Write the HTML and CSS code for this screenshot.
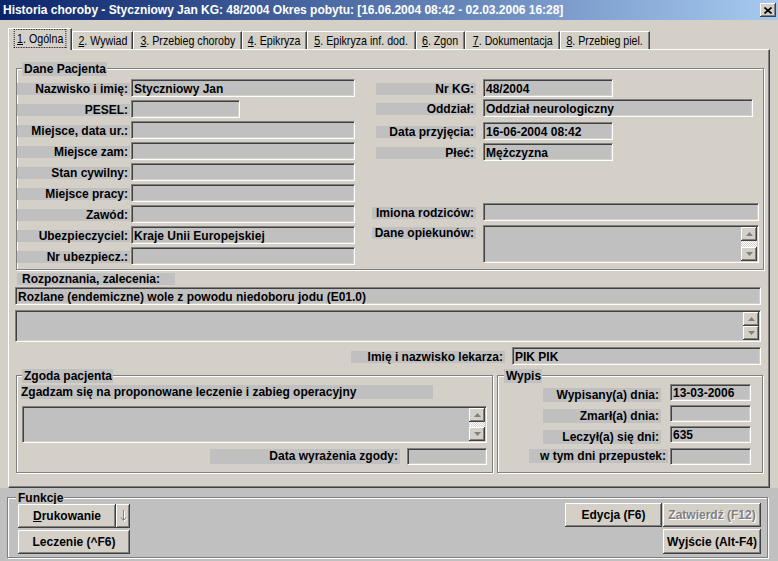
FILE: index.html
```html
<!DOCTYPE html>
<html>
<head>
<meta charset="utf-8">
<link rel="stylesheet" href="styles.css">
</head>
<body>
<div class="window">
  <div class="titlebar">
    <div class="title">Historia choroby - Styczniowy Jan KG: 48/2004 Okres pobytu: [16.06.2004 08:42 - 02.03.2006 16:28]</div>
    <div class="close"><svg width="8" height="7" viewBox="0 0 8 7"><path d="M0.5 0.5L7.5 6.5M7.5 0.5L0.5 6.5" stroke="#000" stroke-width="1.7"/></svg></div>
  </div>

  <div class="tabs">
    <div class="tab active t1"><span class="tt focus"><u>1</u>. Ogólna</span></div>
    <div class="tab t2"><span class="tt"><u>2</u>. Wywiad</span></div>
    <div class="tab t3"><span class="tt"><u>3</u>. Przebieg choroby</span></div>
    <div class="tab t4"><span class="tt"><u>4</u>. Epikryza</span></div>
    <div class="tab t5"><span class="tt"><u>5</u>. Epikryza inf. dod.</span></div>
    <div class="tab t6"><span class="tt"><u>6</u>. Zgon</span></div>
    <div class="tab t7"><span class="tt"><u>7</u>. Dokumentacja</span></div>
    <div class="tab t8"><span class="tt"><u>8</u>. Przebieg piel.</span></div>
  </div>

  <div class="panel">
    <div class="group dane">
      <div class="legend">Dane Pacjenta</div>
      <div class="cols">
        <div class="col-left">
          <div class="row"><div class="lbl">Nazwisko i imię:</div><div class="fld w224">Styczniowy Jan</div></div>
          <div class="row"><div class="lbl">PESEL:</div><div class="fld w109"></div></div>
          <div class="row"><div class="lbl">Miejsce, data ur.:</div><div class="fld w224"></div></div>
          <div class="row"><div class="lbl">Miejsce zam:</div><div class="fld w224"></div></div>
          <div class="row"><div class="lbl">Stan cywilny:</div><div class="fld w224"></div></div>
          <div class="row"><div class="lbl">Miejsce pracy:</div><div class="fld w224"></div></div>
          <div class="row"><div class="lbl">Zawód:</div><div class="fld w224"></div></div>
          <div class="row"><div class="lbl">Ubezpieczyciel:</div><div class="fld w224">Kraje Unii Europejskiej</div></div>
          <div class="row"><div class="lbl">Nr ubezpiecz.:</div><div class="fld w224"></div></div>
        </div>
        <div class="col-right">
          <div class="row r1"><div class="lbl rl">Nr KG:</div><div class="fld w130">48/2004</div></div>
          <div class="row r2"><div class="lbl rl">Oddział:</div><div class="fld w270">Oddział neurologiczny</div></div>
          <div class="row r3"><div class="lbl rl">Data przyjęcia:</div><div class="fld w130">16-06-2004 08:42</div></div>
          <div class="row r4"><div class="lbl rl">Płeć:</div><div class="fld w130">Mężczyzna</div></div>
          <div class="row r5"><div class="lbl rl wide">Imiona rodziców:</div><div class="fld w276"></div></div>
          <div class="row r6"><div class="lbl rl wide top">Dane opiekunów:</div>
            <div class="fld memo w276 h38"><div class="memo-body"></div><div class="sbar"><div class="sbtn"><svg width="7" height="4" viewBox="0 0 7 4"><path d="M3.5 0L7 4H0z" fill="#808080"/></svg></div><div class="strack"></div><div class="sbtn"><svg width="7" height="4" viewBox="0 0 7 4"><path d="M0 0H7L3.5 4z" fill="#808080"/></svg></div></div></div>
          </div>
        </div>
      </div>
    </div>

    <div class="lbl rozp">Rozpoznania, zalecenia:</div>
    <div class="fld diag">Rozlane (endemiczne) wole z powodu niedoboru jodu (E01.0)</div>
    <div class="fld memo diag-memo"><div class="memo-body"></div><div class="sbar"><div class="sbtn"><svg width="7" height="4" viewBox="0 0 7 4"><path d="M3.5 0L7 4H0z" fill="#808080"/></svg></div><div class="strack"></div><div class="sbtn"><svg width="7" height="4" viewBox="0 0 7 4"><path d="M0 0H7L3.5 4z" fill="#808080"/></svg></div></div></div>

    <div class="row lekarz"><div class="lbl lek-lbl">Imię i nazwisko lekarza:</div><div class="fld lek-fld">PIK PIK</div></div>

    <div class="lower">
      <div class="group zgoda">
        <div class="legend">Zgoda pacjenta</div>
        <div class="lbl zg-lbl">Zgadzam się na proponowane leczenie i zabieg operacyjny</div>
        <div class="fld memo zg-memo"><div class="memo-body"></div><div class="sbar"><div class="sbtn"><svg width="7" height="4" viewBox="0 0 7 4"><path d="M3.5 0L7 4H0z" fill="#808080"/></svg></div><div class="strack"></div><div class="sbtn"><svg width="7" height="4" viewBox="0 0 7 4"><path d="M0 0H7L3.5 4z" fill="#808080"/></svg></div></div></div>
        <div class="row zg-row"><div class="lbl zg-date-lbl">Data wyrażenia zgody:</div><div class="fld zg-date"></div></div>
      </div>
      <div class="group wypis">
        <div class="legend wy-legend">Wypis</div>
        <div class="wrow first"><div class="lbl wl">Wypisany(a) dnia:</div><div class="fld wf">13-03-2006</div></div>
        <div class="wrow"><div class="lbl wl">Zmarł(a) dnia:</div><div class="fld wf"></div></div>
        <div class="wrow"><div class="lbl wl">Leczył(a) się dni:</div><div class="fld wf">635</div></div>
        <div class="wrow last"><div class="lbl wl wl2">w tym dni przepustek:</div><div class="fld wf wf2"></div></div>
      </div>
    </div>
  </div>

  <div class="footer">
    <div class="group funkcje">
      <div class="legend fn-legend">Funkcje</div>
      <div class="fn-body">
        <div class="fn-left">
          <div class="fn-line">
            <div class="btn b-druk"><span><u>D</u>rukowanie</span></div>
            <div class="btn b-arrow"><svg width="7" height="14" viewBox="0 0 7 14"><path d="M4.5 2V12M2 9.5L4.5 12.5L7 9.5" stroke="#fff" fill="none"/><path d="M3.5 1V11M1 8.5L3.5 11.5L6 8.5" stroke="#808080" fill="none"/></svg></div>
          </div>
          <div class="btn b-lecz">Leczenie (^F6)</div>
        </div>
        <div class="fn-right">
          <div class="btn b-edit">Edycja (F6)</div>
          <div class="btn b-ok disabled">Zatwierdź (F12)</div>
          <div class="spacer"></div>
          <div class="btn b-exit">Wyjście (Alt-F4)</div>
        </div>
      </div>
    </div>
  </div>
</div>
</body>
</html>
```

FILE: styles.css
```css
* { box-sizing: border-box; }
html, body { margin: 0; padding: 0; }
body {
  width: 778px;
  height: 561px;
  overflow: hidden;
  background: #d4d0c8;
  font-family: "Liberation Sans", Arial, sans-serif;
  font-size: 12px;
  font-weight: bold;
  color: #000;
}
.window {
  width: 778px;
  height: 561px;
  display: flex;
  flex-direction: column;
}

/* title bar */
.titlebar {
  height: 20px;
  flex: none;
  display: flex;
  align-items: center;
  background: linear-gradient(to right, #0a246a, #a6caf0);
  color: #fff;
  padding-left: 3px;
}
.title {
  flex: 1;
  font-size: 12px;
  line-height: 20px;
  letter-spacing: -0.02px;
  white-space: nowrap;
  overflow: hidden;
}
.close {
  width: 16px;
  height: 14px;
  margin-right: 2px;
  background: #d4d0c8;
  box-shadow: inset -1px -1px #404040, inset 1px 1px #fff, inset -2px -2px #808080;
  display: flex;
  align-items: center;
  justify-content: center;
}

/* tabs */
.tabs {
  flex: none;
  margin-top: 8px;
  height: 21px;
  padding-left: 8px;
  display: flex;
  align-items: flex-end;
}
.tab {
  height: 18px;
  display: flex;
  justify-content: center;
  align-items: flex-start;
  font-weight: normal;
  font-size: 13px;
  line-height: 15px;
  padding-top: 1px;
  white-space: nowrap;
  border-left: 1px solid #fff;
  border-top: 1px solid #fff;
  border-right: 1px solid #404040;
  box-shadow: inset -1px 0 #808080;
  background: #d4d0c8;
}
.tt {
  flex: none;
  display: inline-block;
  transform: scaleX(0.82);
  transform-origin: center;
}
.tab.active {
  height: 22px;
  margin-bottom: -1px;
  position: relative;
  z-index: 1;
  padding-top: 1px;
}
.focus {
  outline: 1px dotted #000;
  outline-offset: 0;
  padding: 1px 3px 1px 3px;
}
.t1 { width: 64px; }
.t2 { width: 61px; }
.t3 { width: 109px; }
.t4 { width: 65px; }
.t5 { width: 109px; }
.t6 { width: 49px; }
.t7 { width: 95px; }
.t8 { width: 90px; }

/* tab page */
.panel {
  flex: none;
  margin-left: 8px;
  width: 762px;
  height: 439px;
  border: 1px solid;
  border-color: #fff #404040 #404040 #fff;
  box-shadow: inset -1px -1px #808080;
  display: flex;
  flex-direction: column;
  align-items: flex-start;
}

/* group boxes */
.group {
  border: 1px solid #808080;
  box-shadow: inset 1px 1px #fff, 1px 1px #fff;
  display: flex;
  flex-direction: column;
  align-items: flex-start;
}
.legend {
  height: 14px;
  line-height: 14px;
  margin-top: -7px;
  margin-left: 5px;
  padding: 0 1px 0 2px;
  background: #c0c0c0;
  white-space: nowrap;
}
.dane {
  margin-top: 18px;
  margin-left: 7px;
  width: 748px;
  height: 202px;
}
.cols { display: flex; }
.col-left { display: flex; flex-direction: column; }
.col-left .row { margin-top: 3px; }
.row { display: flex; height: 18px; }

.lbl {
  background: #c0c0c0;
  height: 12px;
  line-height: 12px;
  white-space: nowrap;
}
.row .lbl { margin-top: 4px; }
.col-left .lbl { width: 113px; text-align: right; padding-right: 2px; }

.fld {
  height: 18px;
  background: #c0c0c0;
  border: 1px solid;
  border-color: #808080 #fff #fff #808080;
  box-shadow: inset 1px 1px #404040, inset -1px -1px #d4d0c8;
  padding: 2px 1px 0 2px;
  line-height: 14px;
  white-space: nowrap;
  overflow: hidden;
}
.col-left .fld { margin-left: 1px; }
.w224 { width: 224px; }
.w109 { width: 109px; }
.w130 { width: 130px; }
.w270 { width: 270px; }
.w276 { width: 276px; }
.h38 { height: 38px; }

.col-right { margin-left: 21px; display: flex; flex-direction: column; }
.rl { width: 100px; text-align: right; padding-right: 2px; }
.rl.wide { width: 104px; margin-left: -4px; }
.col-right .fld { margin-left: 7px; }
.r1 { margin-top: 3px; }
.r2 { margin-top: 2px; }
.r3 { margin-top: 5px; }
.r4 { margin-top: 3px; }
.r5 { margin-top: 42px; }
.r6 { margin-top: 4px; height: 38px; }
.lbl.top { margin-top: 2px; }

/* memo fields with scrollbar */
.memo { display: flex; padding: 1px 1px 1px 1px; }
.memo-body { flex: 1; }
.sbar {
  width: 16px;
  display: flex;
  flex-direction: column;
  background-color: #d4d0c8;
  background-image: repeating-conic-gradient(#fff 0 25%, #d4d0c8 0 50%);
  background-size: 2px 2px;
}
.sbtn {
  height: 14px;
  flex: none;
  background: #d4d0c8;
  box-shadow: inset -1px -1px #404040, inset 1px 1px #fff, inset -2px -2px #808080;
  display: flex;
  align-items: center;
  justify-content: center;
}
.strack { flex: 1; }

.rozp {
  margin-top: 3px;
  margin-left: 8px;
  width: 158px;
  padding-left: 5px;
}
.diag { margin-top: 2px; margin-left: 6px; width: 746px; }
.diag-memo { margin-top: 5px; margin-left: 6px; width: 746px; height: 32px; }

.lekarz { margin-top: 5px; }
.lek-lbl { margin-left: 342px; width: 154px; text-align: right; padding-right: 2px; }
.lek-fld { margin-left: 7px; width: 249px; }

.lower { display: flex; margin-top: 10px; margin-left: 7px; }
.zgoda { width: 477px; height: 98px; }
.zg-lbl {
  margin-top: 2px;
  margin-left: 4px;
  width: 412px;
  height: 14px;
  line-height: 14px;
}
.zg-memo { margin-top: 7px; margin-left: 5px; width: 465px; height: 37px; }
.zg-row { margin-top: 5px; height: 17px; }
.zg-row .lbl.zg-date-lbl {
  margin-top: 1px;
  margin-left: 193px;
  width: 190px;
  height: 15px;
  line-height: 15px;
  text-align: right;
  padding-right: 2px;
}
.zg-date { margin-left: 7px; width: 80px; height: 17px; }

.wypis { margin-left: 4px; width: 266px; height: 98px; }
.wy-legend { margin-left: 6px; }
.wrow { display: flex; height: 17px; margin-top: 4px; }
.wrow.first { margin-top: 1px; }
.wrow.last { margin-top: 5px; }
.wl {
  margin-top: 4px;
  margin-left: 45px;
  width: 118px;
  height: 14px;
  line-height: 14px;
  text-align: right;
  padding-right: 2px;
}
.wl.wl2 { margin-left: 31px; width: 139px; margin-top: 1px; }
.wf { margin-left: 9px; width: 81px; height: 17px; padding-top: 1px; }
.wf.wf2 { margin-left: 2px; }

/* footer */
.footer {
  flex: 1;
  background: #c0c0c0;
  display: flex;
  flex-direction: column;
}
.funkcje {
  margin-top: 9px;
  margin-left: 7px;
  width: 761px;
  height: 61px;
}
.fn-legend { margin-left: 8px; }
.fn-body {
  align-self: stretch;
  display: flex;
  justify-content: space-between;
  margin-top: -1px;
}
.fn-left { margin-left: 10px; display: flex; flex-direction: column; }
.fn-line { display: flex; }
.btn {
  height: 24px;
  background: #d4d0c8;
  box-shadow: inset -1px -1px #404040, inset 1px 1px #fff, inset -2px -2px #808080;
  display: flex;
  align-items: center;
  justify-content: center;
  white-space: nowrap;
}
.b-druk { width: 98px; }
.b-arrow { width: 14px; }
.b-lecz { width: 112px; margin-top: 2px; }
.fn-right {
  margin-right: 6px;
  margin-top: -1px;
  display: grid;
  grid-template-columns: 97px 98px;
  grid-template-rows: 24px 25px;
  column-gap: 1px;
  row-gap: 2px;
}
.b-exit { height: 25px; }
.disabled { color: #808080; text-shadow: 1px 1px #fff; }
```
